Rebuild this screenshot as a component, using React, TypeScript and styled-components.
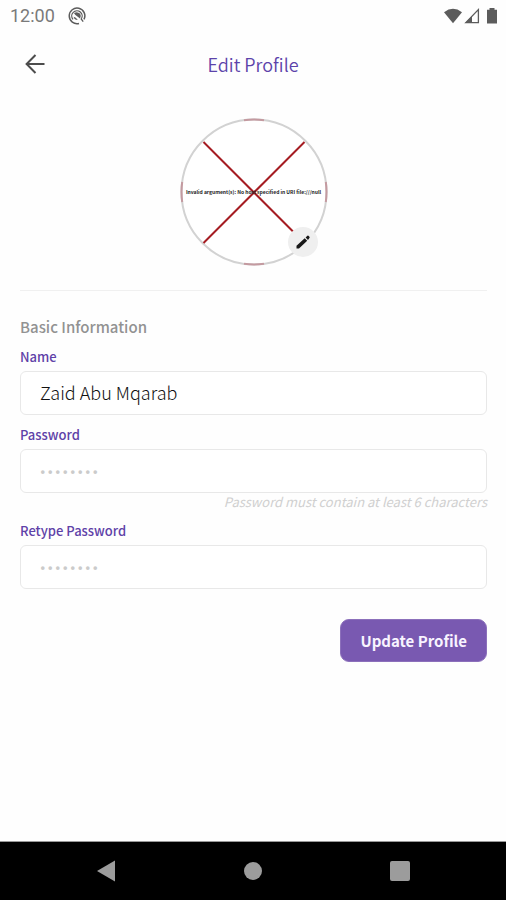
import React from "react";
import styled, { createGlobalStyle } from "styled-components";

const GlobalStyle = createGlobalStyle`
  *, *::before, *::after { box-sizing: border-box; }
  body {
    margin: 0;
    background: #fefefe;
    font-family: "Noto Sans CJK SC", "Noto Sans", sans-serif;
  }
`;

const Screen = styled.div`
  display: flex;
  flex-direction: column;
  min-height: 100vh;
`;

const StatusBar = styled.div`
  display: flex;
  align-items: center;
  justify-content: space-between;
  height: 32px;
  padding: 0 6px 0 10px;
  color: #5c5c5c;
`;

const StatusGroup = styled.div<{ $gap: number }>`
  display: flex;
  align-items: center;
  gap: ${(p) => p.$gap}px;
`;

const Clock = styled.span`
  font: 400 18px/20px Roboto, sans-serif;
  color: #7a7a7a;
`;

const AppBar = styled.header`
  display: grid;
  grid-template-columns: 48px 1fr 48px;
  align-items: center;
  height: 64px;
  padding: 0 11px;
`;

const BackButton = styled.button`
  display: flex;
  align-items: center;
  justify-content: center;
  height: 48px;
  padding: 0;
  border: 0;
  background: none;
  color: #4c4c4c;
  cursor: pointer;
`;

const Title = styled.h1`
  margin: 0;
  text-align: center;
  font-size: 18px;
  line-height: 24px;
  font-weight: 350;
  color: #5c43aa;
`;

const Content = styled.main`
  flex: 1;
  display: flex;
  flex-direction: column;
  padding: 22px 19px 24px 20px;
`;

const Avatar = styled.div`
  position: relative;
  align-self: center;
  width: 148px;
  height: 148px;
`;

const AvatarError = styled.span`
  position: absolute;
  inset: 0;
  display: flex;
  align-items: center;
  justify-content: center;
  white-space: nowrap;
  font-size: 5px;
  line-height: 8px;
  font-weight: 700;
  color: #222;
`;

const EditButton = styled.button`
  position: absolute;
  right: 10px;
  bottom: 9px;
  display: flex;
  align-items: center;
  justify-content: center;
  width: 30px;
  height: 30px;
  padding: 0;
  border: 0;
  border-radius: 50%;
  background: #efefef;
  color: #181818;
  cursor: pointer;
`;

const Divider = styled.hr`
  width: 100%;
  margin: 24px 0;
  border: 0;
  border-top: 1px solid #f0f0f0;
`;

const Form = styled.form`
  display: flex;
  flex-direction: column;
`;

const SectionTitle = styled.h2`
  margin: 0 0 8px;
  font-size: 15px;
  line-height: 24px;
  font-weight: 500;
  color: #929292;
`;

const Field = styled.div`
  display: flex;
  flex-direction: column;
  margin-bottom: 10px;
`;

const Label = styled.label`
  margin-bottom: 4px;
  font-size: 13px;
  line-height: 20px;
  font-weight: 500;
  color: #5f42a8;
`;

const Input = styled.input`
  width: 100%;
  height: 44px;
  padding: 0 19px 2px;
  border: 1px solid #e8e8e8;
  border-radius: 6px;
  outline: none;
  background: #fff;
  font-family: inherit;
  font-size: 18px;
  font-weight: 300;
  color: #111;

  &:placeholder-shown {
    padding: 6px 18px 0;
  }

  &::placeholder {
    font: 400 28px/36px "Noto Sans", sans-serif;
    color: #cbcbcb;
    opacity: 1;
  }
`;

const Hint = styled.small`
  align-self: flex-end;
  font-size: 13px;
  line-height: 18px;
  font-weight: 400;
  font-style: italic;
  color: #d0d0d0;
`;

const SubmitButton = styled.button`
  align-self: flex-end;
  height: 43px;
  margin-top: 20px;
  padding: 0 19px;
  border: 1px solid #8c70bb;
  border-radius: 9px;
  background: #7959b1;
  font-family: inherit;
  font-size: 15px;
  font-weight: 700;
  color: #f8f4ff;
  cursor: pointer;
`;

const SystemNav = styled.nav`
  display: grid;
  grid-template-columns: repeat(3, 1fr);
  align-items: center;
  height: 59px;
  padding: 0 33px;
  border-top: 1px solid #999;
  background: #000;
`;

const NavButton = styled.button`
  display: flex;
  justify-content: center;
  padding: 0;
  border: 0;
  background: none;
  color: #9c9c9c;
  cursor: pointer;
`;

const DOTS = "········";

export default function App() {
  return (
    <>
      <GlobalStyle />
      <Screen>
        <StatusBar>
          <StatusGroup $gap={13}>
            <Clock>12:00</Clock>
            <svg width="18" height="18" viewBox="0 0 18 18" fill="none">
              <path d="M11 16.4A7.8 7.8 0 1 1 16 12.4" stroke="currentColor" strokeWidth="1.5" />
              <path d="M5 12.4A5.2 5.2 0 1 1 13.2 12L15.2 14.6" stroke="currentColor" strokeWidth="1.3" />
              <path d="M6 6.2Q9 3.8 12.2 6.8Q13.6 9.3 12 11.6L9.4 9.6Q7.8 8.8 6 6.2Z" fill="currentColor" />
              <path d="M5.6 9.8Q6.2 13 9.8 13L7.8 10.8Z" fill="currentColor" />
            </svg>
          </StatusGroup>
          <StatusGroup $gap={2}>
            <svg width="18" height="16" viewBox="0 0 18 16" fill="currentColor">
              <path d="M0 4.2Q9-2.5 18 4.2L9 15.3Z" />
            </svg>
            <svg width="16" height="16" viewBox="0 0 16 16">
              <path d="M1.8 14.6L14.4 1.6V14.6Z" fill="none" stroke="currentColor" strokeWidth="1.3" />
              <path d="M1.2 15L8 8V15Z" fill="currentColor" />
            </svg>
            <svg width="18" height="16" viewBox="0 0 18 16" fill="currentColor">
              <path d="M5 1.8H7.5V0H12.5V1.8H15V15.5H5Z" />
            </svg>
          </StatusGroup>
        </StatusBar>

        <AppBar>
          <BackButton type="button" aria-label="Back">
            <svg width="20" height="20" viewBox="0 0 20 20" fill="none" stroke="currentColor" strokeWidth="2">
              <path d="M19.5 10H2M10.5 1L1.6 10L10.5 19" />
            </svg>
          </BackButton>
          <Title>Edit Profile</Title>
        </AppBar>

        <Content>
          <Avatar>
            <svg width="148" height="148" viewBox="0 0 148 148" fill="none">
              <circle cx="74" cy="74" r="72.5" fill="#fff" stroke="#d2d2d2" strokeWidth="2" />
              <g stroke="#c49aa0" strokeWidth="2">
                <path d="M64 2.2Q74 .8 84 2.2" />
                <path d="M64 145.8Q74 147.2 84 145.8" />
                <path d="M2.2 64Q.8 74 2.2 84" />
                <path d="M145.8 64Q147.2 74 145.8 84" />
              </g>
              <path d="M23.5 24L124.5 125M124.5 24L23.5 125" stroke="#a51c22" strokeWidth="2" />
            </svg>
            <AvatarError>Invalid argument(s): No host specified in URI file:///null</AvatarError>
            <EditButton type="button" aria-label="Change photo">
              <svg width="14" height="14" viewBox="0 0 14 14" fill="currentColor">
                <path d="M.5 13.5V10.7L8.7 3.3L11.2 5.8L3 13.5ZM9.6 2.5L11.4.8Q12.1.3 12.8 1L13.4 1.7Q14 2.4 13.4 3L12 5Z" />
              </svg>
            </EditButton>
          </Avatar>

          <Divider />

          <Form onSubmit={(e) => e.preventDefault()}>
            <SectionTitle>Basic Information</SectionTitle>
            <Field>
              <Label htmlFor="name">Name</Label>
              <Input id="name" type="text" defaultValue="Zaid Abu Mqarab" />
            </Field>
            <Field>
              <Label htmlFor="password">Password</Label>
              <Input id="password" type="password" placeholder={DOTS} aria-describedby="password-hint" />
              <Hint id="password-hint">Password must contain at least 6 characters</Hint>
            </Field>
            <Field>
              <Label htmlFor="retype">Retype Password</Label>
              <Input id="retype" type="password" placeholder={DOTS} />
            </Field>
            <SubmitButton type="submit">Update Profile</SubmitButton>
          </Form>
        </Content>

        <SystemNav aria-label="System navigation">
          <NavButton type="button" aria-label="Back">
            <svg width="18" height="22" viewBox="0 0 18 22" fill="currentColor">
              <path d="M18 .5V21.5L0 11Z" />
            </svg>
          </NavButton>
          <NavButton type="button" aria-label="Home">
            <svg width="18" height="18" viewBox="0 0 18 18" fill="currentColor">
              <circle cx="9" cy="9" r="9" />
            </svg>
          </NavButton>
          <NavButton type="button" aria-label="Recent apps">
            <svg width="20" height="20" viewBox="0 0 20 20" fill="currentColor">
              <rect width="20" height="20" rx="2" />
            </svg>
          </NavButton>
        </SystemNav>
      </Screen>
    </>
  );
}
